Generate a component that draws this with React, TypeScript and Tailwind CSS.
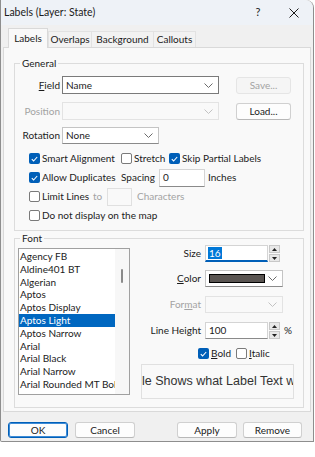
import React from "react";

const Chevron = ({ color = "#6b6b6b" }: { color?: string }) => (
  <svg width="9" height="5" viewBox="0 0 9 5" fill="none">
    <path d="M0.5 0.5 L4.5 4.5 L8.5 0.5" stroke={color} strokeWidth="1" />
  </svg>
);

const Check = ({ checked, disabled }: { checked?: boolean; disabled?: boolean }) =>
  checked ? (
    <span className="w-[11px] h-[11px] rounded-[2px] bg-[#005fb8] flex items-center justify-center shrink-0">
      <svg width="7" height="6" viewBox="0 0 7 6" fill="none">
        <path d="M0.8 3.2 L2.6 5 L6.2 1" stroke="#ffffff" strokeWidth="1.1" />
      </svg>
    </span>
  ) : (
    <span
      className={
        "w-[11px] h-[11px] rounded-[2px] border shrink-0 " +
        (disabled ? "border-[#c4c4c4] bg-[#f7f7f7]" : "border-[#7a7a7a] bg-white")
      }
    />
  );

const Btn = ({
  children,
  disabled,
  primary,
  w = "w-[60px]",
  h = "h-[16px]",
}: {
  children: React.ReactNode;
  disabled?: boolean;
  primary?: boolean;
  w?: string;
  h?: string;
}) => (
  <div
    className={
      "flex items-center justify-center rounded-[3px] border text-[10px] " +
      w +
      " " +
      h +
      " " +
      (disabled
        ? "border-[#e5e5e5] bg-[#f5f5f5] text-[#a3a3a3]"
        : primary
        ? "border-[#005fb8] bg-[#fdfdfd] text-[#1b1b1b] shadow-[inset_0_0_0_1px_#3d8bd6]"
        : "border-[#d0d0d0] border-b-[#b8b8b8] bg-[#fdfdfd] text-[#1b1b1b]")
    }
  >
    {children}
  </div>
);

const SpinBtns = () => (
  <div className="flex flex-col ml-[1px] h-[17px] w-[11px] gap-[1px]">
    <div className="flex-1 flex items-center justify-center bg-[#e8e8e8] border border-[#c8c8c8]">
      <svg width="5" height="3" viewBox="0 0 5 3">
        <path d="M0 3 L2.5 0 L5 3 Z" fill="#222" />
      </svg>
    </div>
    <div className="flex-1 flex items-center justify-center bg-[#e8e8e8] border border-[#c8c8c8]">
      <svg width="5" height="3" viewBox="0 0 5 3">
        <path d="M0 0 L2.5 3 L5 0 Z" fill="#222" />
      </svg>
    </div>
  </div>
);

const fonts = [
  "Agency FB",
  "Aldine401 BT",
  "Algerian",
  "Aptos",
  "Aptos Display",
  "Aptos Light",
  "Aptos Narrow",
  "Arial",
  "Arial Black",
  "Arial Narrow",
  "Arial Rounded MT Bold",
  "Bahnschrift Light",
];

export default function App() {
  return (
    <div className="w-[315px] h-[457px] bg-white font-['Lato','Noto_Sans',sans-serif] text-[10px] text-[#1b1b1b] overflow-hidden">
      <div className="w-[314px] h-[442px] bg-[#f0f0f0] border-r border-b border-l border-[#8e8e8e] rounded-tr-[8px] rounded-bl-[2px] flex flex-col">
        {/* Title bar */}
        <div className="h-[25px] bg-[#eef2f7] rounded-tr-[8px] flex items-center shrink-0">
          <span className="ml-[3px] text-[10.5px] text-[#1b1b1b]">Labels (Layer: State)</span>
          <span className="ml-auto w-[10px] text-center text-[11px]">?</span>
          <span className="ml-[26px] mr-[14px] flex items-center">
            <svg width="10" height="10" viewBox="0 0 10 10" fill="none">
              <path d="M0.5 0.5 L9.5 9.5 M9.5 0.5 L0.5 9.5" stroke="#1b1b1b" strokeWidth="1" />
            </svg>
          </span>
        </div>
        {/* Tabs */}
        <div className="h-[21px] flex items-end pl-[7px] mt-[1px] shrink-0 relative z-10">
          <div className="h-[20px] w-[40px] flex items-center justify-center bg-[#f9f9f9] border border-b-0 border-[#d9d9d9] mb-[-1px]">
            Labels
          </div>
          <div className="h-[16px] w-[44px] flex items-center justify-center bg-[#f2f2f2] border border-b-0 border-[#e2e2e2]">
            Overlaps
          </div>
          <div className="h-[16px] w-[62px] flex items-center justify-center bg-[#f2f2f2] border border-b-0 border-l-0 border-[#e2e2e2]">
            Background
          </div>
          <div className="h-[16px] w-[42px] flex items-center justify-center bg-[#f2f2f2] border border-b-0 border-l-0 border-[#e2e2e2]">
            Callouts
          </div>
        </div>
        {/* Panel */}
        <div className="ml-[2px] w-[308px] h-[365px] bg-[#f9f9f9] border border-[#d9d9d9] pl-[10px] pr-[5px] pt-[9px] shrink-0">
          {/* General */}
          <fieldset className="border border-[#dcdcdc] h-[174px] w-[290px]">
            <legend className="ml-[5px] px-[2px] h-[13px] leading-[13px]">General</legend>
            <div className="flex flex-col pt-[6px]">
              <div className="flex items-center h-[18px]">
                <span className="w-[45px] text-right">
                  <span className="underline">F</span>ield
                </span>
                <div className="ml-[2px] w-[157px] h-[18px] bg-white border border-[#7a7a7a] flex items-center pl-[3px] pr-[5px]">
                  <span>Name</span>
                  <span className="ml-auto">
                    <Chevron />
                  </span>
                </div>
                <div className="ml-[17px]">
                  <Btn disabled w="w-[55px]" h="h-[17px]">
                    Save...
                  </Btn>
                </div>
              </div>
              <div className="flex items-center h-[18px] mt-[8px]">
                <span className="w-[45px] text-right text-[#a3a3a3]">Position</span>
                <div className="ml-[2px] w-[157px] h-[18px] bg-[#f9f9f9] border border-[#e3e3e3] flex items-center pr-[5px]">
                  <span className="ml-auto">
                    <Chevron color="#c2c2c2" />
                  </span>
                </div>
                <div className="ml-[17px] mt-[1px]">
                  <Btn w="w-[55px]" h="h-[17px]">
                    Load...
                  </Btn>
                </div>
              </div>
              <div className="flex items-center h-[17px] mt-[7px]">
                <span className="w-[45px] text-right">Rotation</span>
                <div className="ml-[2px] w-[97px] h-[17px] bg-white border border-[#c4c4c4] border-b-[#8a8a8a] flex items-center pl-[3px] pr-[5px]">
                  <span>None</span>
                  <span className="ml-auto">
                    <Chevron />
                  </span>
                </div>
              </div>
              <div className="mt-[5px] pl-[14px] flex flex-col">
                <div className="h-[19px] flex items-center">
                  <div className="w-[92px] flex items-center gap-[2px]">
                    <Check checked />
                    <span>Smart Alignment</span>
                  </div>
                  <div className="w-[48px] flex items-center gap-[2px]">
                    <Check />
                    <span>Stretch</span>
                  </div>
                  <div className="flex items-center gap-[2px]">
                    <Check checked />
                    <span>Skip Partial Labels</span>
                  </div>
                </div>
                <div className="h-[19px] flex items-center">
                  <div className="w-[92px] flex items-center gap-[2px]">
                    <Check checked />
                    <span>Allow Duplicates</span>
                  </div>
                  <span className="w-[38px]">Spacing</span>
                  <div className="w-[46px] h-[18px] bg-white border border-[#d4d4d4] border-b-[#8a8a8a] flex items-center pl-[3px]">
                    0
                  </div>
                  <span className="ml-[3px]">Inches</span>
                </div>
                <div className="h-[19px] flex items-center">
                  <div className="w-[64px] flex items-center gap-[2px]">
                    <Check />
                    <span>Limit Lines</span>
                  </div>
                  <span className="w-[14px] text-[#a3a3a3]">to</span>
                  <div className="w-[25px] h-[18px] bg-[#f9f9f9] border border-[#e0e0e0]" />
                  <span className="ml-[5px] text-[#a3a3a3]">Characters</span>
                </div>
                <div className="h-[19px] flex items-center">
                  <div className="flex items-center gap-[2px]">
                    <Check />
                    <span>Do not display on the map</span>
                  </div>
                </div>
              </div>
            </div>
          </fieldset>
          {/* Font */}
          <fieldset className="mt-[1px] border border-[#dcdcdc] h-[176px] w-[290px]">
            <legend className="ml-[5px] px-[2px] h-[13px] leading-[13px]">Font</legend>
            <div className="flex items-start">
              <div className="ml-[3px] mt-[3px] w-[112px] h-[147px] bg-white border border-[#a0a0a0] flex overflow-hidden">
                <div className="w-[96px] pt-[1px] flex flex-col">
                  {fonts.map((f) => (
                    <div
                      key={f}
                      className={
                        "h-[12.8px] leading-[12.8px] pl-[1px] whitespace-nowrap shrink-0 " +
                        (f === "Aptos Light" ? "bg-[#0067c0] text-white" : "")
                      }
                    >
                      {f}
                    </div>
                  ))}
                </div>
                <div className="w-[14px] bg-[#f7f7f7] flex justify-center pt-[20px]">
                  <div className="w-[2px] h-[14px] bg-[#8a8a8a] rounded-full" />
                </div>
              </div>
              <div className="flex flex-col mt-[0px]">
                <div className="flex items-center h-[17px]">
                  <span className="w-[71px] text-right">Size</span>
                  <div className="ml-[4px] w-[63px] h-[17px] bg-white border border-[#d4d4d4] border-b-2 border-b-[#005fb8] flex items-center pl-[2px]">
                    <span className="bg-[#0078d7] text-white px-[1px] leading-[12px]">16</span>
                  </div>
                  <SpinBtns />
                </div>
                <div className="flex items-center h-[17px] mt-[8px]">
                  <span className="w-[71px] text-right">
                    <span className="underline">C</span>olor
                  </span>
                  <div className="ml-[4px] w-[78px] h-[17px] bg-white border border-[#c4c4c4] border-b-[#8a8a8a] flex items-center pl-[3px] pr-[5px]">
                    <div className="w-[56px] h-[9px] bg-[#5a5552] border border-black" />
                    <span className="ml-auto">
                      <Chevron />
                    </span>
                  </div>
                </div>
                <div className="flex items-center h-[17px] mt-[9px]">
                  <span className="w-[71px] text-right text-[#a3a3a3]">
                    For<span className="underline">m</span>at
                  </span>
                  <div className="ml-[4px] w-[78px] h-[17px] bg-[#f9f9f9] border border-[#e3e3e3] flex items-center pr-[5px]">
                    <span className="ml-auto">
                      <Chevron color="#c2c2c2" />
                    </span>
                  </div>
                </div>
                <div className="flex items-center h-[17px] mt-[9px]">
                  <span className="w-[71px] text-right">Line Height</span>
                  <div className="ml-[4px] w-[63px] h-[17px] bg-white border border-[#d4d4d4] border-b-[#8a8a8a] flex items-center pl-[3px]">
                    100
                  </div>
                  <SpinBtns />
                  <span className="ml-[4px]">%</span>
                </div>
                <div className="flex items-center h-[11px] mt-[9px] pl-[68px]">
                  <Check checked />
                  <span className="ml-[2px] w-[25px]">
                    <span className="underline">B</span>old
                  </span>
                  <Check />
                  <span className="ml-[2px]">
                    <span className="underline">I</span>talic
                  </span>
                </div>
                <div className="ml-[11px] mt-[5px] w-[153px] h-[35px] bg-[#f9f9f9] border border-[#e0e0e0] overflow-hidden flex items-center">
                  <span className="whitespace-nowrap font-['Liberation_Sans',Arial,sans-serif] text-[12.5px] text-[#333]">
                    le Shows what Label Text will
                  </span>
                </div>
              </div>
            </div>
          </fieldset>
        </div>
        {/* Bottom buttons */}
        <div className="flex items-center mt-[10px] pl-[7px]">
          <Btn primary>OK</Btn>
          <div className="ml-[7px]">
            <Btn>Cancel</Btn>
          </div>
          <div className="ml-[42px]">
            <Btn>Apply</Btn>
          </div>
          <div className="ml-[6px]">
            <Btn w="w-[59px]">Remove</Btn>
          </div>
        </div>
      </div>
    </div>
  );
}
